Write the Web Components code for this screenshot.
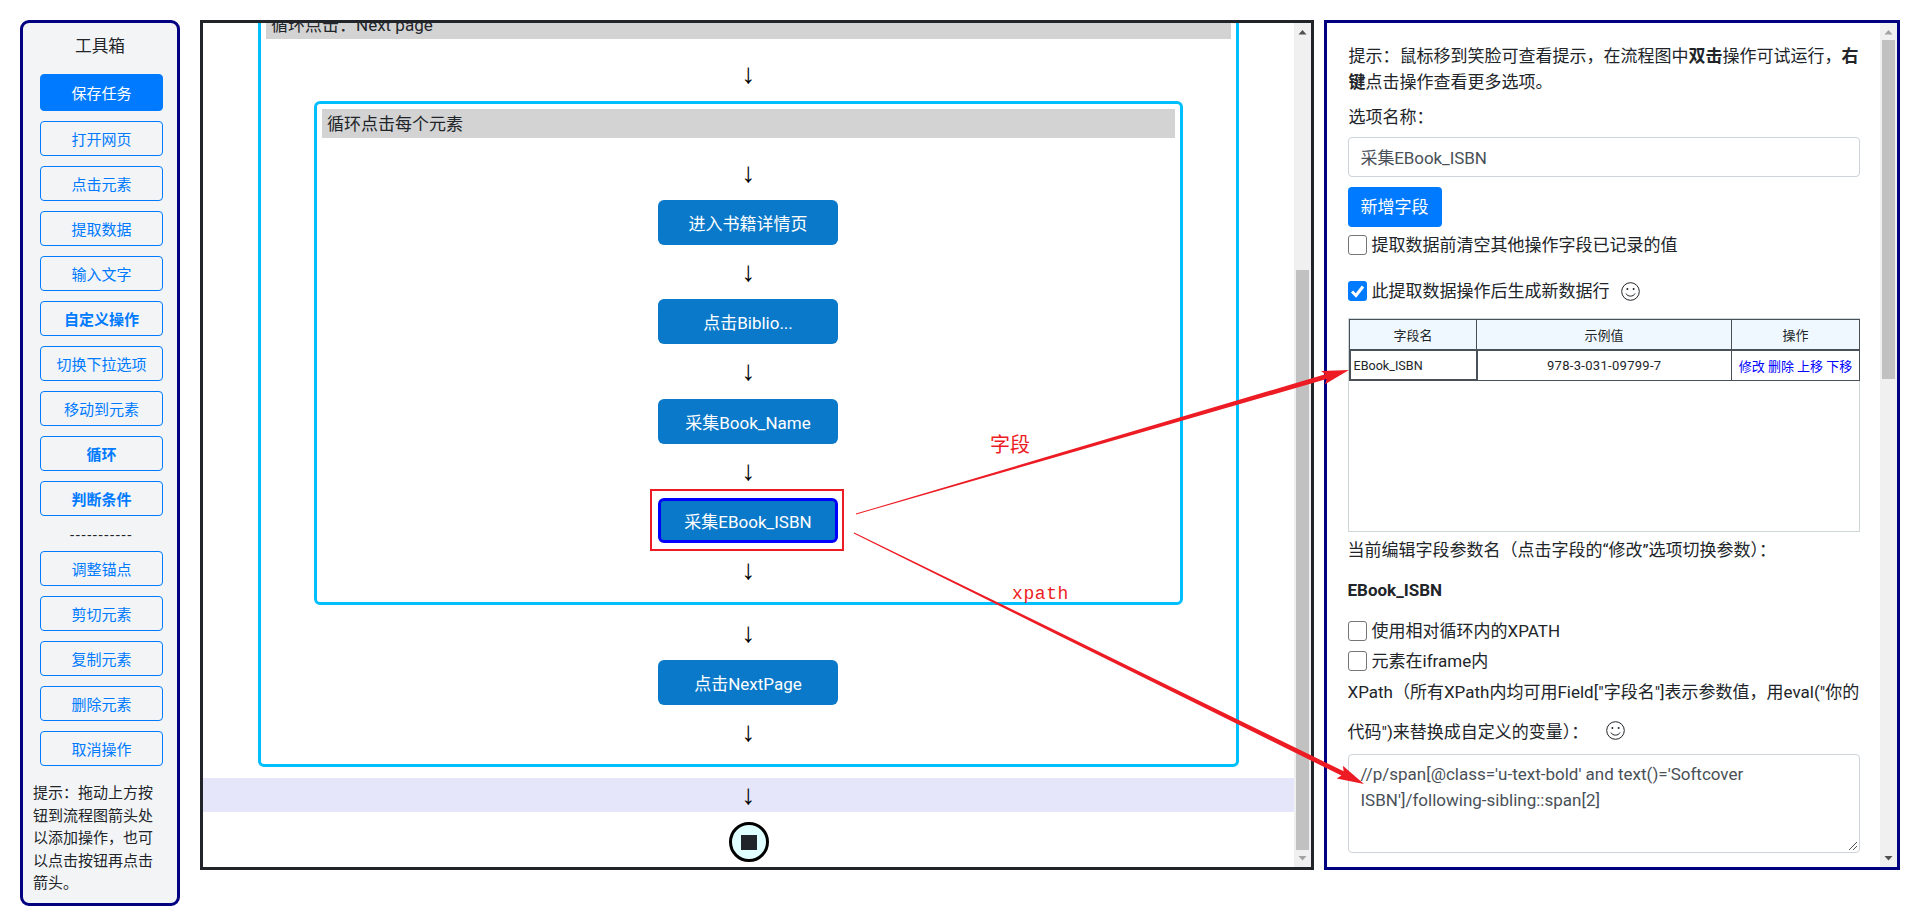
<!DOCTYPE html>
<html lang="zh">
<head>
<meta charset="utf-8">
<title>流程图</title>
<style>
    body {
        margin: 0;
        background: #fff;
        color: #212529;
        font-family: Roboto, "Noto Sans CJK SC", sans-serif;
        font-size: 17px;
    }
</style>
</head>
<body>
<app-page>
    <tool-box slot="left">
        <tool-button primary>保存任务</tool-button>
        <tool-button>打开网页</tool-button>
        <tool-button>点击元素</tool-button>
        <tool-button>提取数据</tool-button>
        <tool-button>输入文字</tool-button>
        <tool-button bold>自定义操作</tool-button>
        <tool-button>切换下拉选项</tool-button>
        <tool-button>移动到元素</tool-button>
        <tool-button bold>循环</tool-button>
        <tool-button bold>判断条件</tool-button>
        <tool-sep></tool-sep>
        <tool-button>调整锚点</tool-button>
        <tool-button>剪切元素</tool-button>
        <tool-button>复制元素</tool-button>
        <tool-button>删除元素</tool-button>
        <tool-button>取消操作</tool-button>
    </tool-box>

    <flow-panel slot="middle">
        <flow-loop title="循环点击：Next page" outer>
            <flow-arrow></flow-arrow>
            <flow-loop title="循环点击每个元素">
                <flow-arrow></flow-arrow>
                <flow-node>进入书籍详情页</flow-node>
                <flow-arrow></flow-arrow>
                <flow-node>点击Biblio...</flow-node>
                <flow-arrow></flow-arrow>
                <flow-node>采集Book_Name</flow-node>
                <flow-arrow></flow-arrow>
                <flow-node selected>采集EBook_ISBN</flow-node>
                <flow-arrow></flow-arrow>
            </flow-loop>
            <flow-arrow></flow-arrow>
            <flow-node>点击NextPage</flow-node>
            <flow-arrow></flow-arrow>
        </flow-loop>
    </flow-panel>

    <options-panel slot="right"></options-panel>
</app-page>
<red-notes></red-notes>

<script>
// PAGE SHELL: THREE COLUMNS SIDE BY SIDE
class AppPage extends HTMLElement {
    constructor() {
        super();
        this.attachShadow({ mode: 'open' });
        this.shadowRoot.innerHTML = `
            <style>
                :host { display: flex; align-items: flex-start; padding: 20px 20px 0 20px; }
                .gap-a { flex: 0 0 20px; }
                .gap-b { flex: 0 0 10px; }
            </style>
            <slot name="left"></slot>
            <div class="gap-a"></div>
            <slot name="middle"></slot>
            <div class="gap-b"></div>
            <slot name="right"></slot>
        `;
    }
}

// LEFT TOOLBOX
class ToolBox extends HTMLElement {
    constructor() {
        super();
        this.attachShadow({ mode: 'open' });
        this.shadowRoot.innerHTML = `
            <style>
                :host {
                    display: block;
                    box-sizing: border-box;
                    width: 160px;
                    height: 886px;
                    border: 3px solid #000080;
                    border-radius: 9px;
                    background: #f3f4f6;
                }
                .title { text-align: center; font-size: 16.7px; line-height: 26px; margin-top: 11px; }
                .list { display: flex; flex-direction: column; gap: 10px; margin: 14px 14px 0 17px; }
                .tip { font-size: 15px; line-height: 22.5px; margin: 16px 20px 0 10px; }
            </style>
            <div class="title">工具箱</div>
            <div class="list"><slot></slot></div>
            <div class="tip">提示：拖动上方按钮到流程图箭头处以添加操作，也可以点击按钮再点击箭头。</div>
        `;
    }
}

class ToolButton extends HTMLElement {
    constructor() {
        super();
        this.attachShadow({ mode: 'open' });
        this.shadowRoot.innerHTML = `
            <style>
                :host {
                    display: flex;
                    align-items: center;
                    justify-content: center;
                    box-sizing: border-box;
                    height: 35px;
                    border: 1px solid #007bff;
                    border-radius: 4px;
                    color: #007bff;
                    font-size: 15px;
                }
                :host([bold]) { font-weight: 700; }
                :host([primary]) { height: 37px; background: #007bff; color: #fff; }
            </style>
            <slot></slot>
        `;
    }
}

class ToolSep extends HTMLElement {
    constructor() {
        super();
        this.attachShadow({ mode: 'open' });
        this.shadowRoot.innerHTML = `
            <style>
                :host { display: block; height: 25px; margin: -5px 0; line-height: 29px; text-align: center; font-size: 15px; letter-spacing: 1.6px; }
            </style>
            -----------
        `;
    }
}

// MIDDLE FLOW CHART, SHOWN SCROLLED TO ITS END
class FlowPanel extends HTMLElement {
    constructor() {
        super();
        this.attachShadow({ mode: 'open' });
        this.shadowRoot.innerHTML = `
            <style>
                :host {
                    display: block;
                    position: relative;
                    box-sizing: border-box;
                    flex: 0 0 1114px;
                    height: 850px;
                    border: 3px solid #212529;
                    overflow: hidden;
                }
                .canvas { width: 1091px; }
                .band { height: 34px; margin-top: 11px; background: #e6e6fa; display: flex; justify-content: center; }
                .end {
                    box-sizing: border-box;
                    width: 40px;
                    height: 40px;
                    margin: 10px auto 0;
                    border: 3px solid #000;
                    border-radius: 50%;
                    background: #e0ffff;
                    display: flex;
                    align-items: center;
                    justify-content: center;
                }
                .end i { display: block; width: 16px; height: 15px; background: #212529; }
            </style>
            <div class="canvas">
                <slot></slot>
                <div class="band"><flow-arrow style="height:34px"></flow-arrow></div>
                <div class="end"><i></i></div>
            </div>
            <fake-scrollbar thumb-top="247" thumb-height="580" end="down"></fake-scrollbar>
        `;
    }
}

class FlowLoop extends HTMLElement {
    constructor() {
        super();
        this.attachShadow({ mode: 'open' });
        this.shadowRoot.innerHTML = `
            <style>
                :host {
                    display: block;
                    box-sizing: border-box;
                    width: 869px;
                    margin: 0 auto;
                    padding: 5px;
                    border: 3px solid #00bfff;
                    border-radius: 6px;
                }
                :host([outer]) { width: 981px; margin: -21px 55px 0 55px; }
                .head {
                    height: 29px;
                    line-height: 31px;
                    padding-left: 5px;
                    margin-bottom: 7px;
                    background: #d3d3d3;
                    font-size: 17px;
                }
                :host([outer]) .head { margin-bottom: 8px; }
            </style>
            <div class="head"></div>
            <slot></slot>
        `;
        this.shadowRoot.querySelector('.head').textContent = this.getAttribute('title');
    }
}

class FlowArrow extends HTMLElement {
    constructor() {
        super();
        this.attachShadow({ mode: 'open' });
        this.shadowRoot.innerHTML = `
            <style>
                :host {
                    display: flex;
                    align-items: center;
                    justify-content: center;
                    height: 54.4px;
                    font-family: "Liberation Sans", sans-serif;
                    font-size: 28px;
                    line-height: 30px;
                    color: #000;
                }
            </style>
            ↓
        `;
    }
}

class FlowNode extends HTMLElement {
    constructor() {
        super();
        this.attachShadow({ mode: 'open' });
        this.shadowRoot.innerHTML = `
            <style>
                :host {
                    display: flex;
                    align-items: center;
                    justify-content: center;
                    box-sizing: border-box;
                    width: 180px;
                    height: 45px;
                    margin: 0 auto 0 calc(50% - 90.5px);
                    border-radius: 6px;
                    background: #0a79c9;
                    color: #fff;
                    font-size: 17px;
                }
                :host([selected]) { border: 3px solid #0000ff; }
            </style>
            <slot></slot>
        `;
    }
}

// DRAWN SCROLLBAR LIKE THE ONE IN THE SCREENSHOT
class FakeScrollbar extends HTMLElement {
    constructor() {
        super();
        this.attachShadow({ mode: 'open' });
        const top = this.getAttribute('thumb-top');
        const height = this.getAttribute('thumb-height');
        const end = this.getAttribute('end');
        this.shadowRoot.innerHTML = `
            <style>
                :host { position: absolute; top: 0; right: 0; bottom: 0; width: 17px; background: #f0f0f0; display: block; }
                .thumb { position: absolute; left: 2px; right: 2px; background: #c1c1c1; }
                svg { position: absolute; left: 0; width: 17px; height: 17px; }
            </style>
            <svg style="top:0"><path d="M8.5 7 L12.5 11.5 L4.5 11.5 Z" fill="${end === 'up' ? '#a3a3a3' : '#505050'}"/></svg>
            <div class="thumb" style="top:${top}px;height:${height}px"></div>
            <svg style="bottom:0"><path d="M8.5 10.5 L12.5 6 L4.5 6 Z" fill="${end === 'down' ? '#a3a3a3' : '#505050'}"/></svg>
        `;
    }
}

class SmileIcon extends HTMLElement {
    constructor() {
        super();
        this.attachShadow({ mode: 'open' });
        this.shadowRoot.innerHTML = `
            <style>:host { display: inline-block; width: 19px; height: 19px; }</style>
            <svg width="19" height="19" viewBox="0 0 19 19" fill="none" stroke="#212529">
                <circle cx="9.5" cy="9.5" r="8.8"/>
                <circle cx="6.4" cy="7" r="1" fill="#212529" stroke="none"/>
                <circle cx="12.6" cy="7" r="1" fill="#212529" stroke="none"/>
                <path d="M5 11.5 C6.5 15 12.5 15 14 11.5"/>
            </svg>
        `;
    }
}

class CheckRow extends HTMLElement {
    constructor() {
        super();
        this.attachShadow({ mode: 'open' });
        const checked = this.hasAttribute('checked');
        this.shadowRoot.innerHTML = `
            <style>
                :host { display: flex; align-items: center; height: 20px; font-size: 17px; line-height: 18px; }
                .box {
                    box-sizing: border-box;
                    flex: 0 0 19px;
                    height: 20px;
                    margin-right: 5px;
                    border: 1px solid #767676;
                    border-radius: 3px;
                    background: #fff;
                }
                :host([checked]) .box { border: 0; background: #007bff; }
                svg { display: block; }
            </style>
            <div class="box">${checked ? '<svg width="19" height="20" viewBox="0 0 19 20"><path d="M4 10.5 L8 14.5 L15 5.5" fill="none" stroke="#fff" stroke-width="3"/></svg>' : ''}</div>
            <slot></slot>
        `;
    }
}

// RIGHT OPTIONS PANEL
class OptionsPanel extends HTMLElement {
    constructor() {
        super();
        this.attachShadow({ mode: 'open' });
        this.shadowRoot.innerHTML = `
            <style>
                :host {
                    display: block;
                    position: relative;
                    box-sizing: border-box;
                    flex: 0 0 576px;
                    height: 850px;
                    border: 3px solid #000080;
                    overflow: hidden;
                    font-size: 17px;
                }
                .body { width: 512.5px; padding: 20px 0 0 20.5px; }
                .line { line-height: 26px; }
                .inset { padding-left: 1px; }
                .label { line-height: 29px; margin-top: 8px; }
                .field {
                    box-sizing: border-box;
                    border: 1px solid #ced4da;
                    border-radius: 4px;
                    color: #495057;
                    background: #fff;
                }
                .name { height: 40px; line-height: 40px; padding-left: 12px; margin-top: 5px; letter-spacing: -0.1px; }
                .add {
                    width: 94px;
                    height: 40px;
                    line-height: 40px;
                    margin-top: 10px;
                    text-align: center;
                    border-radius: 4px;
                    background: #007bff;
                    color: #fff;
                }
                .tablebox {
                    box-sizing: border-box;
                    height: 214px;
                    margin-top: 17px;
                    border: 1px solid #ced8d8;
                }
                table {
                    border-collapse: collapse;
                    table-layout: fixed;
                    width: 510px;
                    font-size: 13px;
                    text-align: center;
                }
                th, td { height: 29px; padding: 0; border: 1px solid #495057; font-weight: 400; }
                td { height: 28px; }
                th { background: #f0f8ff; border-bottom-width: 2px; }
                td.first { border-width: 2px; text-align: left; padding-left: 3px; font-size: 12.6px; }
                td.value { letter-spacing: 0.3px; }
                td.links { color: #0000ff; }
                .xpath { line-height: 40px; margin-top: 1px; }
                .area {
                    position: relative;
                    height: 99px;
                    margin-top: 2px;
                    padding: 6px 12px;
                    line-height: 26px;
                }
                .area svg { position: absolute; right: 1px; bottom: 1px; }
            </style>
            <div class="body">
                <div class="line inset">提示：鼠标移到笑脸可查看提示，在流程图中<b>双击</b>操作可试运行，<b>右键</b>点击操作查看更多选项。</div>
                <div class="label inset">选项名称：</div>
                <div class="field name">采集EBook_ISBN</div>
                <div class="add">新增字段</div>
                <check-row style="margin-top:8px">提取数据前清空其他操作字段已记录的值</check-row>
                <check-row checked style="margin-top:26px">此提取数据操作后生成新数据行<smile-icon style="margin-left:11px"></smile-icon></check-row>
                <div class="tablebox">
                    <table>
                        <colgroup><col style="width:127px"><col style="width:255px"><col style="width:128px"></colgroup>
                        <tr><th>字段名</th><th>示例值</th><th>操作</th></tr>
                        <tr><td class="first">EBook_ISBN</td><td class="value">978-3-031-09799-7</td><td class="links">修改 删除 上移 下移</td></tr>
                    </table>
                </div>
                <div class="line" style="margin-top:5px">当前编辑字段参数名（点击字段的“修改”选项切换参数）：</div>
                <div class="line" style="margin-top:14px"><b>EBook_ISBN</b></div>
                <check-row style="margin-top:18px">使用相对循环内的XPATH</check-row>
                <check-row style="margin-top:10px">元素在iframe内</check-row>
                <div class="xpath">XPath（所有XPath内均可用Field["字段名"]表示参数值，用eval("你的代码")来替换成自定义的变量）：<smile-icon style="margin-left:18px;vertical-align:-2px"></smile-icon></div>
                <div class="field area">//p/span[@class='u-text-bold' and text()='Softcover ISBN']/following-sibling::span[2]
                    <svg width="10" height="10" viewBox="0 0 10 10" stroke="#555" fill="none"><path d="M1 9 L9 1 M5 9 L9 5"/></svg>
                </div>
            </div>
            <fake-scrollbar thumb-top="17" thumb-height="339" end="up"></fake-scrollbar>
        `;
    }
}

// RED HAND-DRAWN NOTES THAT LIE OVER THE WHOLE PAGE
class RedNotes extends HTMLElement {
    constructor() {
        super();
        this.attachShadow({ mode: 'open' });
        this.shadowRoot.innerHTML = `
            <style>
                :host { position: absolute; left: 0; top: 0; width: 1920px; height: 922px; pointer-events: none; display: block; }
                svg { display: block; }
                text { fill: #ed1c24; }
            </style>
            <svg width="1920" height="922">
                <rect x="651" y="490" width="192" height="60" fill="none" stroke="#ed1c24" stroke-width="2"/>
                <polygon points="${this.taperedArrow(856, 514, 1349, 370)}" fill="#ed1c24"/>
                <polygon points="${this.taperedArrow(854, 533, 1364, 784)}" fill="#ed1c24"/>
                <text x="990" y="452" font-family="Noto Sans CJK SC" font-size="20">字段</text>
                <text x="1012" y="599" font-family="Liberation Mono" font-size="18" letter-spacing="0.6">xpath</text>
            </svg>
        `;
    }

    // LINE THAT GROWS FROM THIN TO THICK, ENDING IN AN ARROW HEAD
    taperedArrow(x1, y1, x2, y2) {
        const len = Math.hypot(x2 - x1, y2 - y1);
        const ux = (x2 - x1) / len, uy = (y2 - y1) / len;
        const px = -uy, py = ux;
        const at = (along, side) => `${(x1 + ux * along + px * side).toFixed(1)},${(y1 + uy * along + py * side).toFixed(1)}`;
        const neck = len - 24;
        const mid = len * 0.4;
        return [at(0, 0.4), at(mid, 1.4), at(neck, 2.5), at(neck - 3, 7), at(len, 0), at(neck - 3, -7), at(neck, -2.5), at(mid, -1.4), at(0, -0.4)].join(' ');
    }
}

customElements.define('app-page', AppPage);
customElements.define('tool-box', ToolBox);
customElements.define('tool-button', ToolButton);
customElements.define('tool-sep', ToolSep);
customElements.define('flow-panel', FlowPanel);
customElements.define('flow-loop', FlowLoop);
customElements.define('flow-arrow', FlowArrow);
customElements.define('flow-node', FlowNode);
customElements.define('fake-scrollbar', FakeScrollbar);
customElements.define('smile-icon', SmileIcon);
customElements.define('check-row', CheckRow);
customElements.define('options-panel', OptionsPanel);
customElements.define('red-notes', RedNotes);
</script>
</body>
</html>
